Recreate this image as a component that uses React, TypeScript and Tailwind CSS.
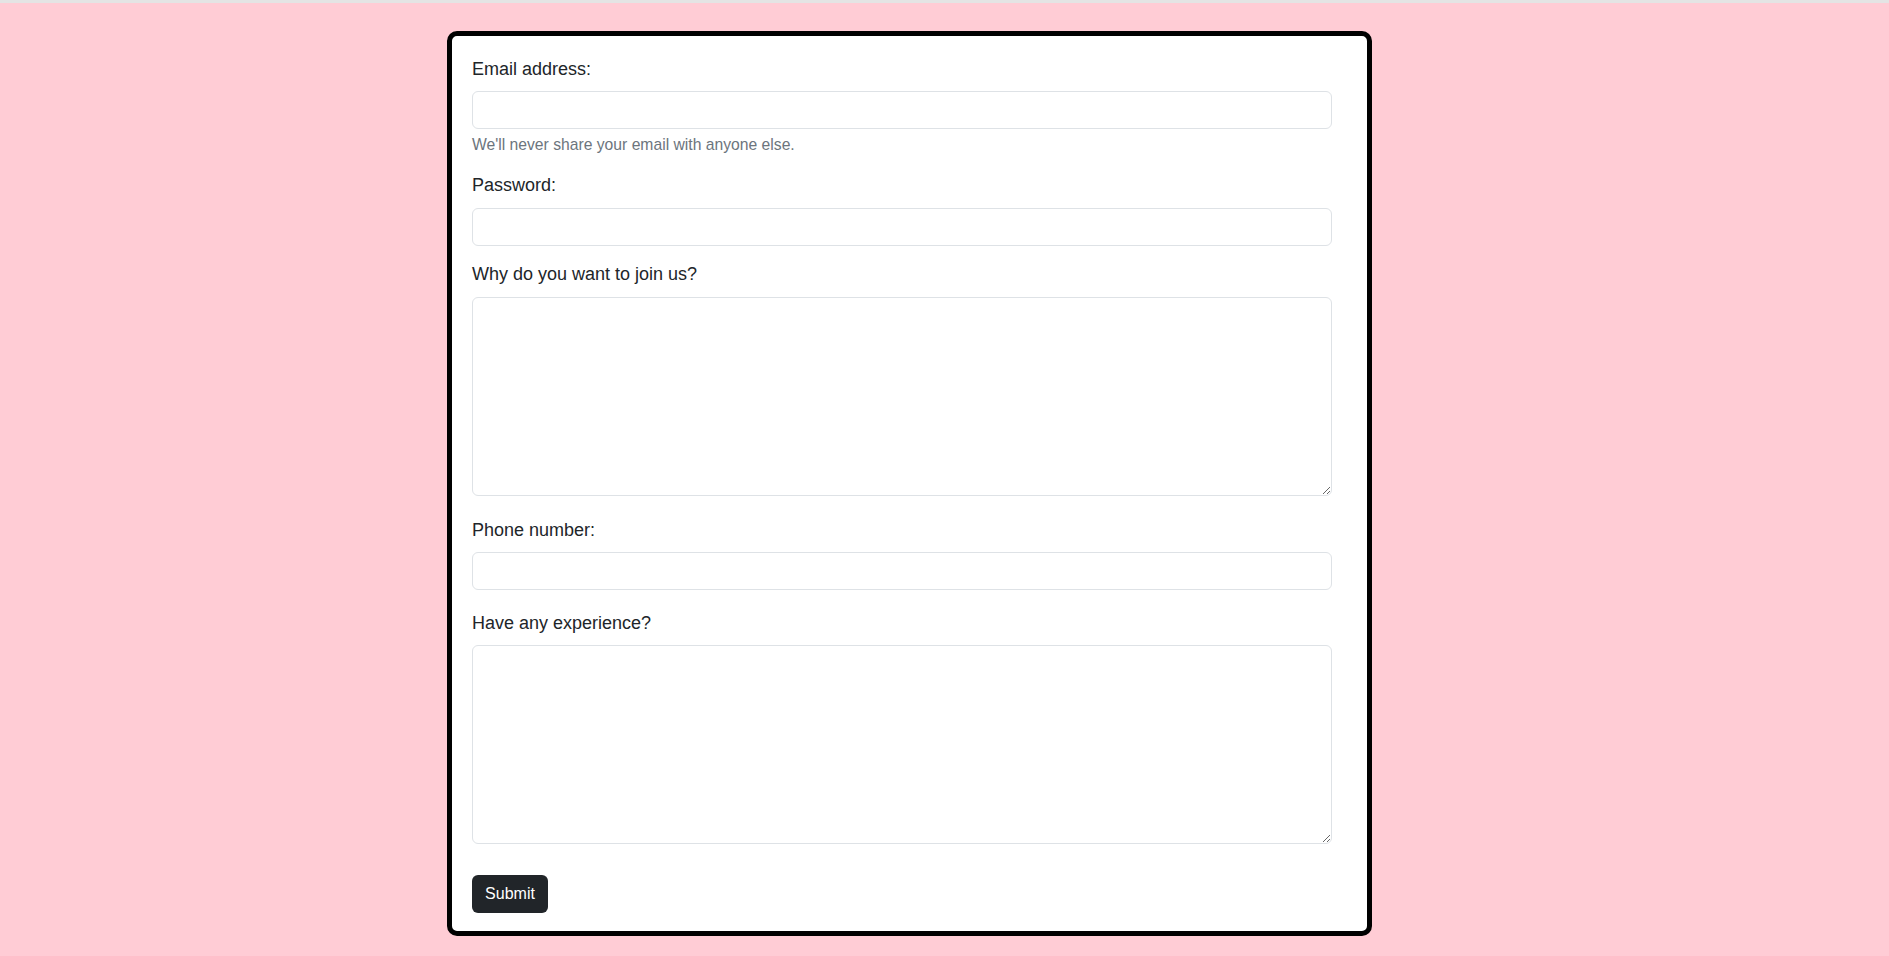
export default function App() {
  const inputCls =
    'block w-[860px] h-[38px] rounded-[6px] border border-[#dee2e6] bg-white px-3 text-base text-[#212529] outline-none';
  const labelCls = 'block text-[18px] leading-[27px] text-[#212529]';

  return (
    <div className="min-h-screen bg-[#ffccd5] font-['Liberation_Sans',Arial,sans-serif]">
      <div className="h-[3px] bg-[#e4e4e4]" />
      <div className="pt-[28px]">
        <form
          className="ml-[447px] w-[925px] h-[905px] rounded-[10px] border-[5px] border-black bg-white pl-[20px] pt-[20px]"
          onSubmit={(e) => e.preventDefault()}
        >
          <label className={labelCls}>Email address:</label>
          <input type="email" className={`${inputCls} mt-[8px]`} />
          <div className="mt-[4px] text-[15.7px] leading-[23px] text-[#6c757d]">
            We'll never share your email with anyone else.
          </div>

          <label className={`${labelCls} mt-[16px]`}>Password:</label>
          <input type="password" className={`${inputCls} mt-[9px]`} />

          <label className={`${labelCls} mt-[15px]`}>Why do you want to join us?</label>
          <textarea className="mt-[9px] block w-[860px] h-[199px] rounded-[6px] border border-[#dee2e6] bg-white px-3 py-1.5 text-base outline-none resize-y" />

          <label className={`${labelCls} mt-[21px]`}>Phone number:</label>
          <input type="tel" className={`${inputCls} mt-[8px]`} />

          <label className={`${labelCls} mt-[20px]`}>Have any experience?</label>
          <textarea className="mt-[8px] block w-[860px] h-[199px] rounded-[6px] border border-[#dee2e6] bg-white px-3 py-1.5 text-base outline-none resize-y" />

          <button
            type="submit"
            className="mt-[31px] h-[38px] w-[76px] rounded-[6px] bg-[#212529] text-base text-white"
          >
            Submit
          </button>
        </form>
      </div>
    </div>
  );
}
